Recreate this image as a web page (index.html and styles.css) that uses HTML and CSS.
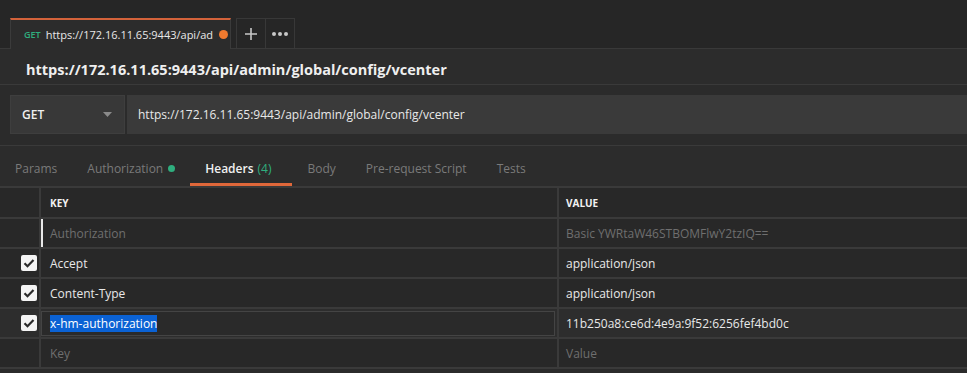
FILE: index.html
```html
<!DOCTYPE html>
<html>
<head>
<meta charset="utf-8">
<link rel="stylesheet" href="styles.css">
</head>
<body>
<div class="app">
  <div class="tabstrip">
    <div class="tab">
      <span class="tab-method">GET</span>
      <span class="tab-title">https://172.16.11.65:9443/api/ad</span>
      <span class="tab-dot"></span>
    </div>
    <div class="tab-btn">
      <svg width="14" height="14" viewBox="0 0 14 14"><path d="M7 1v12M1 7h12" stroke="#c8c8c8" stroke-width="1.6" fill="none"/></svg>
    </div>
    <div class="tab-btn">
      <svg width="18" height="6" viewBox="0 0 18 6"><circle cx="3" cy="3" r="2" fill="#c8c8c8"/><circle cx="9" cy="3" r="2" fill="#c8c8c8"/><circle cx="15" cy="3" r="2" fill="#c8c8c8"/></svg>
    </div>
  </div>
  <div class="title-row">https://172.16.11.65:9443/api/admin/global/config/vcenter</div>
  <div class="req-bar">
    <div class="method">
      <span>GET</span>
      <svg width="9" height="5" viewBox="0 0 9 5"><path d="M0 0h9L4.5 5z" fill="#8a8a8a"/></svg>
    </div>
    <div class="url">https://172.16.11.65:9443/api/admin/global/config/vcenter</div>
  </div>
  <div class="req-tabs">
    <div class="rtab">Params</div>
    <div class="rtab">Authorization <span class="gdot"></span></div>
    <div class="rtab active">Headers <span class="count">(4)</span></div>
    <div class="rtab">Body</div>
    <div class="rtab">Pre-request Script</div>
    <div class="rtab">Tests</div>
  </div>
  <div class="table">
    <div class="row head">
      <div class="c-check"></div>
      <div class="c-key">KEY</div>
      <div class="c-val">VALUE</div>
    </div>
    <div class="row">
      <div class="c-check"></div>
      <div class="c-key muted cursor">Authorization</div>
      <div class="c-val muted">Basic YWRtaW46STBOMFlwY2tzIQ==</div>
    </div>
    <div class="row">
      <div class="c-check"><span class="cb"><svg width="12" height="10" viewBox="0 0 12 10"><path d="M1.5 5.2l3 3L10.5 2" stroke="#2a2a2a" stroke-width="2.2" fill="none"/></svg></span></div>
      <div class="c-key">Accept</div>
      <div class="c-val">application/json</div>
    </div>
    <div class="row">
      <div class="c-check"><span class="cb"><svg width="12" height="10" viewBox="0 0 12 10"><path d="M1.5 5.2l3 3L10.5 2" stroke="#2a2a2a" stroke-width="2.2" fill="none"/></svg></span></div>
      <div class="c-key">Content-Type</div>
      <div class="c-val">application/json</div>
    </div>
    <div class="row hover">
      <div class="c-check"><span class="cb"><svg width="12" height="10" viewBox="0 0 12 10"><path d="M1.5 5.2l3 3L10.5 2" stroke="#2a2a2a" stroke-width="2.2" fill="none"/></svg></span></div>
      <div class="c-key editing"><div class="input"><span class="sel">x-hm-authorization</span></div></div>
      <div class="c-val">11b250a8:ce6d:4e9a:9f52:6256fef4bd0c</div>
    </div>
    <div class="row">
      <div class="c-check"></div>
      <div class="c-key muted">Key</div>
      <div class="c-val muted">Value</div>
    </div>
  </div>
</div>
</body>
</html>
```
FILE: styles.css
```css
* { box-sizing: border-box; }
html, body { margin: 0; padding: 0; }
body {
  background: #2b2b2b;
  font-family: "Open Sans", "Noto Sans", sans-serif;
  color: #e6e6e6;
  width: 967px;
  height: 373px;
  overflow: hidden;
}
.app { display: flex; flex-direction: column; }

.tabstrip {
  height: 49px;
  background: #262626;
  display: flex;
  align-items: flex-end;
  padding-left: 10px;
  border-bottom: 1px solid #393939;
}
.tab {
  width: 221px;
  height: 31px;
  margin-bottom: -1px;
  background: #2c2c2c;
  border-top: 2px solid #d3623a;
  border-left: 1px solid #3b3b3b;
  border-right: 1px solid #3b3b3b;
  display: flex;
  align-items: center;
  padding-left: 13px;
  font-size: 11px;
}
.tab-method { color: #2fae7e; font-size: 9px; font-weight: 600; margin-right: 5px; }
.tab-title { color: #e8e8e8; }
.tab-dot { width: 9px; height: 9px; border-radius: 50%; background: #f07a2f; margin-left: 6px; }
.tab-btn {
  width: 30px;
  height: 30px;
  border: 1px solid #383838;
  border-bottom: none;
  margin-left: -1px;
  display: flex;
  align-items: center;
  justify-content: center;
}
.tab + .tab-btn { margin-left: 5px; }

.title-row {
  height: 36px;
  background: #2c2c2c;
  border-bottom: 1px solid #3a3a3a;
  padding: 5px 0 0 26px;
  display: flex;
  align-items: center;
  font-size: 14.5px;
  font-weight: 700;
  color: #efefef;
}

.req-bar {
  display: flex;
  padding: 10px 0 0 10px;
  height: 60px;
  background: #2b2b2b;
}
.method {
  width: 115px;
  height: 39px;
  background: #383838;
  border: 1px solid #3e3e3e;
  display: flex;
  align-items: center;
  justify-content: space-between;
  padding: 0 12px 0 11px;
  font-size: 12px;
  font-weight: 600;
  color: #efefef;
}
.url {
  flex: 1;
  height: 39px;
  margin-left: 2px;
  background: #3a3a3a;
  display: flex;
  align-items: center;
  padding-left: 11px;
  font-size: 12px;
  color: #e8e8e8;
}

.req-tabs {
  height: 41px;
  border-top: 1px solid #3a3a3a;
  background: #2c2c2c;
  display: flex;
  align-items: stretch;
  font-size: 12px;
  color: #7a7a7a;
}
.rtab {
  display: flex;
  align-items: center;
  padding: 5px 15px 0;
  position: relative;
}
.rtab.active { color: #f0f0f0; font-weight: 600; padding-right: 21px; }
.rtab.active::after {
  content: "";
  position: absolute;
  left: 0; right: 0; bottom: 0;
  height: 3px;
  background: #e0683a;
}
.count { color: #2fae7e; margin-left: 4px; font-weight: 400; }
.gdot { width: 7px; height: 7px; border-radius: 50%; background: #2fae7e; margin-left: 5px; display: inline-block; }

.table {
  border-top: 2px solid #3a3a3a;
  background: #282828;
}
.row {
  display: flex;
  height: 30px;
  border-bottom: 2px solid #3a3a3a;
  font-size: 12px;
  color: #e8e8e8;
}
.row.head { height: 31px; }
.row.hover { background: #2d2d2d; }
.c-check {
  width: 41px;
  border-right: 2px solid #3a3a3a;
  display: flex;
  align-items: center;
  justify-content: flex-end;
  padding-right: 2px;
}
.c-key {
  width: 518px;
  border-right: 2px solid #3a3a3a;
  display: flex;
  align-items: center;
  padding-left: 9px;
}
.c-val {
  flex: 1;
  display: flex;
  align-items: center;
  padding-left: 7px;
}
.head .c-key, .head .c-val { font-size: 10px; font-weight: 700; color: #f2f2f2; }
.muted { color: #6f6f6f; }
.cursor { box-shadow: inset 2px 0 0 #e8e8e8; }
.cb {
  width: 16px;
  height: 16px;
  border-radius: 2px;
  background: #f4f4f4;
  display: flex;
  align-items: center;
  justify-content: center;
}
.c-key.editing { padding: 2px 2px 1px 0; }
.input {
  flex: 1;
  height: 100%;
  border: 1px solid #444;
  background: #2a2a2a;
  display: flex;
  align-items: center;
  padding-left: 8px;
}
.sel { background: #0b62d4; color: #fff; line-height: 17px; }
```
